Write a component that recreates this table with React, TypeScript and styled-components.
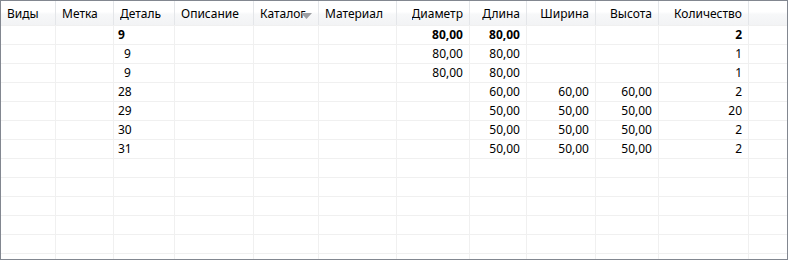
import React from "react";
import styled, { createGlobalStyle } from "styled-components";

const GlobalStyle = createGlobalStyle`
  html, body {
    margin: 0;
    padding: 0;
    background: #fff;
  }
  body {
    font-family: "Noto Sans", "Liberation Sans", sans-serif;
    font-size: 12px;
    color: #000;
  }
`;

type Align = "left" | "right";

interface Column {
  title: string;
  width: number;
  align: Align;
}

const COLUMNS: Column[] = [
  { title: "Виды", width: 55, align: "left" },
  { title: "Метка", width: 58, align: "left" },
  { title: "Деталь", width: 61, align: "left" },
  { title: "Описание", width: 79, align: "left" },
  { title: "Каталог", width: 65, align: "left" },
  { title: "Материал", width: 78, align: "left" },
  { title: "Диаметр", width: 73, align: "right" },
  { title: "Длина", width: 57, align: "right" },
  { title: "Ширина", width: 69, align: "right" },
  { title: "Высота", width: 63, align: "right" },
  { title: "Количество", width: 90, align: "right" },
  { title: "", width: 38, align: "left" },
];

const TEMPLATE = COLUMNS.map((c) => `${c.width}px`).join(" ");

interface Row {
  detail: string;
  indent?: boolean;
  bold?: boolean;
  diameter?: string;
  length?: string;
  width?: string;
  height?: string;
  count?: string;
}

const ROWS: Row[] = [
  { detail: "9", bold: true, diameter: "80,00", length: "80,00", count: "2" },
  { detail: "9", indent: true, diameter: "80,00", length: "80,00", count: "1" },
  { detail: "9", indent: true, diameter: "80,00", length: "80,00", count: "1" },
  { detail: "28", length: "60,00", width: "60,00", height: "60,00", count: "2" },
  { detail: "29", length: "50,00", width: "50,00", height: "50,00", count: "20" },
  { detail: "30", length: "50,00", width: "50,00", height: "50,00", count: "2" },
  { detail: "31", length: "50,00", width: "50,00", height: "50,00", count: "2" },
];

const EMPTY_ROWS = 6;

const Frame = styled.div`
  width: 788px;
  height: 260px;
  box-sizing: border-box;
  border: 1px solid #828790;
  overflow: hidden;
  background: #fff;
`;

const HeaderRow = styled.div`
  display: grid;
  grid-template-columns: ${TEMPLATE};
  height: 25px;
  box-sizing: border-box;
  border-bottom: 1px solid #f0f0f0;
  background: linear-gradient(
    #ffffff 0%,
    #ffffff 45%,
    #f7f8f9 55%,
    #f2f3f5 100%
  );
`;

const HeaderCell = styled.div<{ $align: Align }>`
  position: relative;
  display: flex;
  align-items: center;
  justify-content: ${({ $align }) => ($align === "right" ? "flex-end" : "flex-start")};
  padding: ${({ $align }) => ($align === "right" ? "0 6px 0 0" : "0 0 0 6px")};
  box-sizing: border-box;
  border-right: 1px solid #e4e6e9;
  overflow: hidden;
  white-space: nowrap;
  color: #000;
  &:last-child {
    border-right: none;
  }
`;

const HeaderText = styled.span<{ $clip?: number }>`
  display: block;
  overflow: hidden;
  ${({ $clip }) => ($clip ? `max-width: ${$clip}px;` : "")}
`;

const SortArrow = styled.svg`
  position: absolute;
  left: 47px;
  top: 12px;
`;

const DataRow = styled.div`
  display: grid;
  grid-template-columns: ${TEMPLATE};
  height: 19px;
  box-sizing: border-box;
  border-bottom: 1px solid #f0f0f0;
`;

const Cell = styled.div<{ $align: Align; $bold?: boolean; $indent?: boolean }>`
  display: flex;
  align-items: center;
  justify-content: ${({ $align }) => ($align === "right" ? "flex-end" : "flex-start")};
  padding: ${({ $align, $indent }) =>
    $align === "right" ? "0 6px 0 0" : `0 0 0 ${$indent ? 10 : 4}px`};
  box-sizing: border-box;
  border-right: 1px solid #f0f0f0;
  font-weight: ${({ $bold }) => ($bold ? 700 : 400)};
  white-space: nowrap;
  overflow: hidden;
  line-height: 18px;
  &:last-child {
    border-right: none;
  }
`;

function rowValues(r: Row): string[] {
  return [
    "",
    "",
    r.detail,
    "",
    "",
    "",
    r.diameter ?? "",
    r.length ?? "",
    r.width ?? "",
    r.height ?? "",
    r.count ?? "",
    "",
  ];
}

function App() {
  return (
    <>
      <GlobalStyle />
      <Frame>
        <HeaderRow>
          {COLUMNS.map((c, i) => (
            <HeaderCell key={i} $align={c.align}>
              <HeaderText $clip={c.title === "Каталог" ? 46 : undefined}>{c.title}</HeaderText>
              {c.title === "Каталог" && (
                <SortArrow width="11" height="6" viewBox="0 0 11 6">
                  <path d="M0 0 H11 L5.5 6 Z" fill="#9d9fa3" />
                </SortArrow>
              )}
            </HeaderCell>
          ))}
        </HeaderRow>
        {ROWS.map((r, ri) => (
          <DataRow key={ri}>
            {rowValues(r).map((v, ci) => (
              <Cell
                key={ci}
                $align={COLUMNS[ci].align}
                $bold={r.bold}
                $indent={ci === 2 && r.indent}
              >
                {v}
              </Cell>
            ))}
          </DataRow>
        ))}
        {Array.from({ length: EMPTY_ROWS }).map((_, ri) => (
          <DataRow key={`e${ri}`}>
            {COLUMNS.map((c, ci) => (
              <Cell key={ci} $align={c.align} />
            ))}
          </DataRow>
        ))}
      </Frame>
    </>
  );
}

export default App;
